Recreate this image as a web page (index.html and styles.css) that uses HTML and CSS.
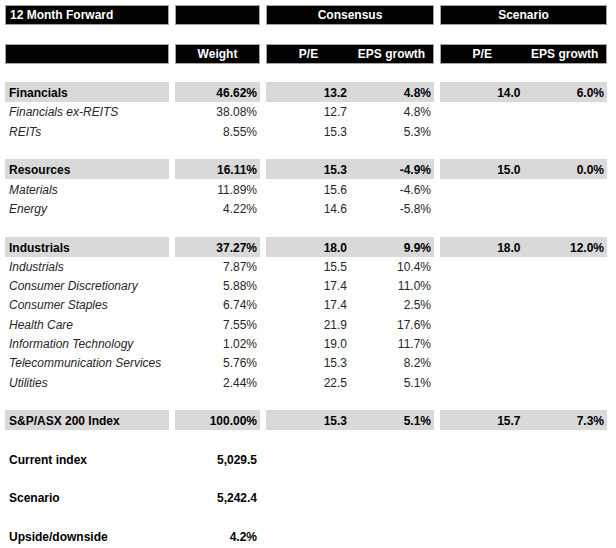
FILE: index.html
```html
<!DOCTYPE html>
<html>
<head>
<meta charset="utf-8">
<link rel="stylesheet" href="styles.css">
</head>
<body>
<div class="sheet">
  <div class="row head">
    <div class="a cell left">12 Month Forward</div>
    <div class="b cell"></div>
    <div class="c cell center">Consensus</div>
    <div class="d cell center">Scenario</div>
  </div>
  <div class="row"></div>
  <div class="row head">
    <div class="a cell"></div>
    <div class="b cell center">Weight</div>
    <div class="c cell split"><span class="sub center">P/E</span><span class="sub center">EPS growth</span></div>
    <div class="d cell split"><span class="sub center">P/E</span><span class="sub center">EPS growth</span></div>
  </div>
  <div class="row"></div>

  <div class="row shade">
    <div class="a cell left">Financials</div>
    <div class="b cell num">46.62%</div>
    <div class="c cell split"><span class="sub num">13.2</span><span class="sub num">4.8%</span></div>
    <div class="d cell split"><span class="sub num">14.0</span><span class="sub num">6.0%</span></div>
  </div>
  <div class="row sub-row">
    <div class="a cell left">Financials ex-REITS</div>
    <div class="b cell num">38.08%</div>
    <div class="c cell split"><span class="sub num">12.7</span><span class="sub num">4.8%</span></div>
    <div class="d cell"></div>
  </div>
  <div class="row sub-row">
    <div class="a cell left">REITs</div>
    <div class="b cell num">8.55%</div>
    <div class="c cell split"><span class="sub num">15.3</span><span class="sub num">5.3%</span></div>
    <div class="d cell"></div>
  </div>
  <div class="row"></div>

  <div class="row shade">
    <div class="a cell left">Resources</div>
    <div class="b cell num">16.11%</div>
    <div class="c cell split"><span class="sub num">15.3</span><span class="sub num">-4.9%</span></div>
    <div class="d cell split"><span class="sub num">15.0</span><span class="sub num">0.0%</span></div>
  </div>
  <div class="row sub-row">
    <div class="a cell left">Materials</div>
    <div class="b cell num">11.89%</div>
    <div class="c cell split"><span class="sub num">15.6</span><span class="sub num">-4.6%</span></div>
    <div class="d cell"></div>
  </div>
  <div class="row sub-row">
    <div class="a cell left">Energy</div>
    <div class="b cell num">4.22%</div>
    <div class="c cell split"><span class="sub num">14.6</span><span class="sub num">-5.8%</span></div>
    <div class="d cell"></div>
  </div>
  <div class="row"></div>

  <div class="row shade">
    <div class="a cell left">Industrials</div>
    <div class="b cell num">37.27%</div>
    <div class="c cell split"><span class="sub num">18.0</span><span class="sub num">9.9%</span></div>
    <div class="d cell split"><span class="sub num">18.0</span><span class="sub num">12.0%</span></div>
  </div>
  <div class="row sub-row">
    <div class="a cell left">Industrials</div>
    <div class="b cell num">7.87%</div>
    <div class="c cell split"><span class="sub num">15.5</span><span class="sub num">10.4%</span></div>
    <div class="d cell"></div>
  </div>
  <div class="row sub-row">
    <div class="a cell left">Consumer Discretionary</div>
    <div class="b cell num">5.88%</div>
    <div class="c cell split"><span class="sub num">17.4</span><span class="sub num">11.0%</span></div>
    <div class="d cell"></div>
  </div>
  <div class="row sub-row">
    <div class="a cell left">Consumer Staples</div>
    <div class="b cell num">6.74%</div>
    <div class="c cell split"><span class="sub num">17.4</span><span class="sub num">2.5%</span></div>
    <div class="d cell"></div>
  </div>
  <div class="row sub-row">
    <div class="a cell left">Health Care</div>
    <div class="b cell num">7.55%</div>
    <div class="c cell split"><span class="sub num">21.9</span><span class="sub num">17.6%</span></div>
    <div class="d cell"></div>
  </div>
  <div class="row sub-row">
    <div class="a cell left">Information Technology</div>
    <div class="b cell num">1.02%</div>
    <div class="c cell split"><span class="sub num">19.0</span><span class="sub num">11.7%</span></div>
    <div class="d cell"></div>
  </div>
  <div class="row sub-row">
    <div class="a cell left">Telecommunication Services</div>
    <div class="b cell num">5.76%</div>
    <div class="c cell split"><span class="sub num">15.3</span><span class="sub num">8.2%</span></div>
    <div class="d cell"></div>
  </div>
  <div class="row sub-row">
    <div class="a cell left">Utilities</div>
    <div class="b cell num">2.44%</div>
    <div class="c cell split"><span class="sub num">22.5</span><span class="sub num">5.1%</span></div>
    <div class="d cell"></div>
  </div>
  <div class="row"></div>

  <div class="row shade">
    <div class="a cell left">S&amp;P/ASX 200 Index</div>
    <div class="b cell num">100.00%</div>
    <div class="c cell split"><span class="sub num">15.3</span><span class="sub num">5.1%</span></div>
    <div class="d cell split"><span class="sub num">15.7</span><span class="sub num">7.3%</span></div>
  </div>
  <div class="row"></div>

  <div class="row bold-row">
    <div class="a cell left">Current index</div>
    <div class="b cell num">5,029.5</div>
  </div>
  <div class="row"></div>
  <div class="row bold-row">
    <div class="a cell left">Scenario</div>
    <div class="b cell num">5,242.4</div>
  </div>
  <div class="row"></div>
  <div class="row bold-row">
    <div class="a cell left">Upside/downside</div>
    <div class="b cell num">4.2%</div>
  </div>
</div>
</body>
</html>
```

FILE: styles.css
```css
html, body {
  margin: 0;
  padding: 0;
  background: #ffffff;
}

.sheet {
  padding: 5px 0 0 5px;
  width: 602px;
  font-family: "Liberation Sans", Arial, sans-serif;
  font-size: 12px;
  color: #1a1a1a;
}

.row {
  display: flex;
  gap: 6px;
  height: 19.3px;
  line-height: 19.3px;
}

.cell {
  box-sizing: border-box;
  height: 100%;
  white-space: nowrap;
}

.sub-row .cell,
.bold-row .cell {
  padding-top: 2px;
}

.a { width: 164px; }
.b { width: 85px; }
.c { width: 168px; }
.d { width: 167px; }

.split {
  display: flex;
}

.sub {
  flex: 1 1 0;
  display: block;
}

.left {
  padding-left: 4px;
}

.num {
  text-align: right;
  padding-right: 3px;
}

.center {
  text-align: center;
}

.head .cell {
  background: #000000;
  color: #ffffff;
  font-weight: bold;
  border: 1px solid #a6a6a6;
  height: 20px;
  line-height: 18px;
}

.shade .cell {
  background: #d9d9d9;
  color: #000000;
  font-weight: bold;
  height: 20px;
  padding-top: 1px;
  line-height: 20px;
}

.sub-row .a {
  font-style: italic;
  color: #262626;
}

.sub-row .cell {
  color: #262626;
}

.bold-row .cell {
  font-weight: bold;
  color: #000000;
}
```
